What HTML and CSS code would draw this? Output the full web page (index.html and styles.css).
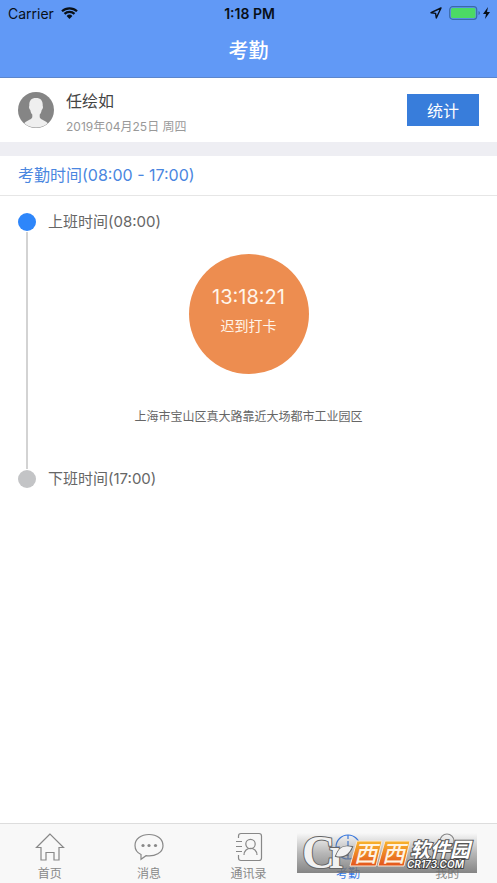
FILE: index.html
```html
<!DOCTYPE html>
<html lang="zh-CN">
<head>
<meta charset="utf-8">
<meta name="viewport" content="width=device-width, initial-scale=1">
<title>考勤</title>
<link rel="stylesheet" href="styles.css">
</head>
<body>
<header class="header">
  <div class="status">
    <div class="status-side">
      <span>Carrier</span>
      <svg width="17" height="12" viewBox="0 0 17 12" aria-hidden="true">
        <path d="M1 4.300a11 11 0 0 1 15 0M3.500 6.900a7.300 7.300 0 0 1 10 0" fill="none" stroke="#091018" stroke-width="2.200"/>
        <path d="M8.500 12 5.600 9a4.200 4.200 0 0 1 5.800 0z" fill="#091018"/>
      </svg>
    </div>
    <span class="clock">1:18 PM</span>
    <div class="status-side status-right">
      <svg width="12" height="12" viewBox="0 0 12 12" aria-hidden="true">
        <path d="M11 1 1 5.700l4.600.700.700 4.600z" fill="none" stroke="#091018" stroke-width="1.400" stroke-linejoin="round"/>
      </svg>
      <svg width="42" height="14" viewBox="0 0 42 14" aria-hidden="true">
        <rect x=".700" y=".700" width="27" height="12.600" rx="3" fill="none" stroke="#3b6aa8" stroke-width="1.200"/>
        <rect x="2" y="2" width="24.500" height="10" rx="1.500" fill="#4cd964"/>
        <path d="M29.500 5v4q1.500-.500 1.500-2t-1.500-2z" fill="#3b6aa8"/>
        <path d="M39 1l-5 7h3l-1 5 5-7h-3z" fill="#091018"/>
      </svg>
    </div>
  </div>
  <h1 class="title">考勤</h1>
</header>

<main class="main">
  <section class="profile">
    <svg class="avatar" viewBox="0 0 36 36" role="img" aria-label="头像">
      <circle cx="18" cy="18" r="18" fill="#858585"/>
      <path d="M18 6c-5 0-7 3-6.700 8-.8 1 .2 3.500 1 4 .4 2.500 1 3.500 2 4.500v2.500c0 2.500-5 3-8 6.200a18 18 0 0 0 23.400 0C26.700 28 21.700 27.500 21.700 25v-2.500c1-1 1.600-2 2-4.500.8-.5 1.800-3 1-4C25 9 23 6 18 6z" fill="#efefef"/>
    </svg>
    <div class="person">
      <h2 class="name">任绘如</h2>
      <p class="date">2019年04月25日 周四</p>
    </div>
    <button class="stats" type="button">统计</button>
  </section>

  <h2 class="hours">考勤时间(08:00 - 17:00)</h2>

  <section class="timeline">
    <span class="dot dot-active"></span>
    <h3 class="shift">上班时间(08:00)</h3>
    <span class="line"></span>
    <div class="punch-area">
      <button class="punch" type="button">
        <span class="punch-time">13:18:21</span>
        <span class="punch-label">迟到打卡</span>
      </button>
      <p class="address">上海市宝山区真大路靠近大场都市工业园区</p>
    </div>
    <span class="dot"></span>
    <h3 class="shift">下班时间(17:00)</h3>
  </section>
</main>

<nav class="tabs">
  <a class="tab" href="#home">
    <svg class="icon" viewBox="0 0 30 30" aria-hidden="true"><path d="M15 2 1.500 15.500H6V28h5v-7.500h8V28h5V15.500h4.500z"/></svg>
    <span>首页</span>
  </a>
  <a class="tab" href="#messages">
    <svg class="icon" viewBox="0 0 30 30" aria-hidden="true"><path d="M7 22.500v4.800l5-3.600c9 1.300 17-3.200 17-10C29 7 23 2.500 15 2.500S1 7 1 13.500c0 4 2.200 7.200 6 9z"/><g class="solid"><circle cx="9" cy="13.500" r="1.600"/><circle cx="15" cy="13.500" r="1.600"/><circle cx="21.500" cy="13.500" r="1.600"/></g></svg>
    <span>消息</span>
  </a>
  <a class="tab" href="#contacts">
    <svg class="icon" viewBox="0 0 30 30" aria-hidden="true"><path d="M4.500 6V4q0-2.500 2.500-2.500h18q2.500 0 2.500 2.500v22q0 2.500-2.500 2.500H7q-2.500 0-2.500-2.500v-3M2 9.500h6M2 14.500h6M2 19.500h6"/><circle cx="16.500" cy="12" r="4.700"/><path d="M10 23c0-9 13-9 13 0"/></svg>
    <span>通讯录</span>
  </a>
  <a class="tab tab-active" href="#attendance" aria-current="page">
    <svg class="icon" viewBox="0 0 30 30" aria-hidden="true"><circle cx="15" cy="15" r="12"/><path d="M15 3v4M15 23v4M3 15h4M23 15h4M15 9v6l4 3"/></svg>
    <span>考勤</span>
  </a>
  <a class="tab" href="#mine">
    <svg class="icon" viewBox="0 0 30 30" aria-hidden="true"><circle cx="15" cy="9" r="7"/><path d="M3 28c0-15 24-15 24 0z"/></svg>
    <span>我的</span>
  </a>
  <svg class="brand" viewBox="0 0 180 40" role="img" aria-label="西西软件园 CR173.COM">
    <defs>
      <linearGradient id="shade" x1="0" y1="0" x2="0" y2="1">
        <stop offset="0" stop-color="#777" stop-opacity="0"/>
        <stop offset=".500" stop-color="#777" stop-opacity=".500"/>
        <stop offset="1" stop-color="#707070" stop-opacity=".850"/>
      </linearGradient>
      <linearGradient id="amber" x1="0" y1="0" x2="0" y2="1">
        <stop offset="0" stop-color="#f8b52c"/>
        <stop offset="1" stop-color="#e3541c"/>
      </linearGradient>
    </defs>
    <rect width="180" height="40" fill="url(#shade)"/>
    <g class="monogram">
      <text x="5" y="35" font-size="46">C</text>
      <text x="32" y="35" font-size="44">r</text>
      <path d="M39 23c3-9 8-11 16-9-3 7-8 11-16 9z"/>
    </g>
    <g class="tiles">
      <path d="M60 8h25l-6 25H53z"/>
      <path d="M88 8h25l-6 25H81z"/>
    </g>
    <g class="tile-text">
      <text x="57" y="29" font-size="23">西</text>
      <text x="85" y="29" font-size="23">西</text>
    </g>
    <text class="brand-cn" x="113" y="24" font-size="20">软件园</text>
    <text class="brand-url" x="110" y="35" font-size="10">CR173.COM</text>
  </svg>
</nav>
</body>
</html>
```
FILE: styles.css
```css
* {
  box-sizing: border-box;
}

body {
  margin: 0;
  min-height: 100vh;
  display: flex;
  flex-direction: column;
  background: #fff;
  color: #666;
  font-family: Inter, "Noto Sans CJK SC", sans-serif;
}

h1, h2, h3, p {
  margin: 0;
  font-weight: 400;
}

button {
  border: 0;
  padding: 0;
  font-family: inherit;
}

.header {
  background: #6199f6;
  border-bottom: 1px solid #5c86cc;
}

.status {
  display: flex;
  align-items: center;
  height: 26px;
  padding: 0 6px 0 8px;
  color: #091018;
  font-size: 14px;
}

.status-side {
  flex: 1;
  display: flex;
  align-items: center;
  gap: 7px;
}

.status-right {
  justify-content: flex-end;
}

.clock {
  font-weight: 600;
}

.title {
  padding: 9px 0 10px;
  color: #fff;
  font-size: 20px;
  line-height: 32px;
  font-weight: 500;
  text-align: center;
}

.main {
  flex: 1;
}

.profile {
  display: flex;
  align-items: center;
  gap: 12px;
  height: 64px;
  padding: 0 18px;
}

.avatar {
  width: 36px;
  height: 36px;
}

.person {
  flex: 1;
  padding-top: 8px;
}

.name {
  font-size: 16px;
  line-height: 26px;
  color: #444;
}

.date {
  font-size: 12px;
  line-height: 26px;
  color: #999;
}

.stats {
  width: 72px;
  height: 32px;
  background: #387ddb;
  color: #fff;
  font-size: 16px;
}

.hours {
  padding: 0 18px;
  border-top: 14px solid #eeeef3;
  border-bottom: 1px solid #e6e6e6;
  color: #4a86e0;
  font-size: 16px;
  line-height: 39px;
}

.timeline {
  display: grid;
  grid-template-columns: 18px 1fr;
  column-gap: 12px;
  align-items: center;
  padding: 16px 18px;
}

.dot {
  width: 18px;
  height: 18px;
  border-radius: 50%;
  background: #c3c4c6;
}

.dot-active {
  background: #2e86fa;
}

.shift {
  font-size: 15px;
  line-height: 20px;
}

.line {
  grid-area: 2 / 1;
  justify-self: center;
  align-self: stretch;
  width: 2px;
  background: #d3d3d3;
}

.punch-area {
  grid-area: 2 / 1 / 3 / 3;
  display: flex;
  flex-direction: column;
  align-items: center;
  gap: 33px;
  padding: 22px 0 42px;
}

.punch {
  display: flex;
  flex-direction: column;
  align-items: center;
  justify-content: center;
  width: 120px;
  height: 120px;
  padding-bottom: 6px;
  border-radius: 50%;
  background: #ed8d50;
  color: #fff5ea;
}

.punch-time {
  font-size: 20px;
  line-height: 30px;
}

.punch-label {
  font-size: 14px;
  line-height: 28px;
}

.address {
  font-size: 12px;
  line-height: 20px;
}

.tabs {
  position: relative;
  display: flex;
  height: 60px;
  padding-top: 8px;
  border-top: 1px solid #ddd;
  background: #f8f8f8;
}

.tab {
  flex: 1;
  display: flex;
  flex-direction: column;
  align-items: center;
  gap: 3px;
  color: #888;
  font-size: 12px;
  line-height: 18px;
  text-decoration: none;
}

.tab-active {
  color: #3478e5;
}

.icon {
  flex: none;
  width: 30px;
  height: 30px;
  fill: none;
  stroke: currentColor;
  stroke-width: 1.2;
}

.solid {
  fill: currentColor;
  stroke: none;
}

.brand {
  position: absolute;
  right: 20px;
  bottom: 10px;
  width: 180px;
  height: 40px;
  overflow: visible;
}

.monogram {
  fill: #f2f2f2;
  stroke: #666;
  stroke-width: 2;
  paint-order: stroke;
  font-family: "Liberation Serif", serif;
  font-weight: 700;
}

.tiles {
  fill: url(#amber);
  stroke: #fbe9d6;
  stroke-width: 1;
}

.tile-text {
  fill: #fff3e2;
  font-family: "Noto Sans CJK SC", sans-serif;
  font-weight: 500;
  font-style: italic;
}

.brand-cn {
  fill: #fff;
  font-family: "Noto Sans CJK SC", sans-serif;
  font-weight: 700;
  font-style: italic;
  stroke: #555;
  stroke-width: 2;
  paint-order: stroke;
}

.brand-url {
  fill: #fff;
  stroke: #444;
  stroke-width: 2;
  paint-order: stroke;
  font-family: Inter, sans-serif;
  font-weight: 600;
  font-style: italic;
}
```
